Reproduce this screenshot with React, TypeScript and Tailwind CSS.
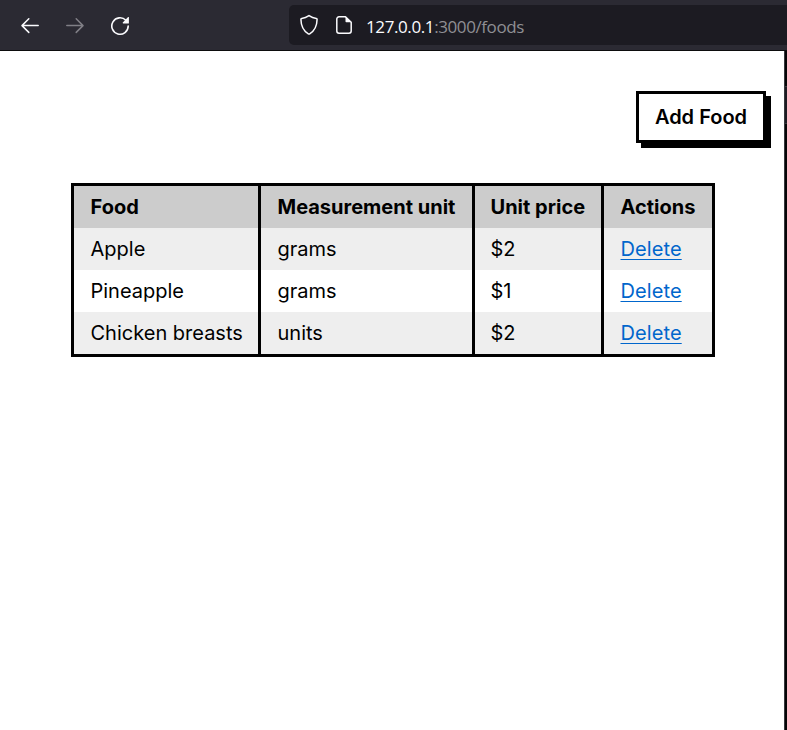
const foods = [
  { name: "Apple", unit: "grams", price: "$2" },
  { name: "Pineapple", unit: "grams", price: "$1" },
  { name: "Chicken breasts", unit: "units", price: "$2" },
];

const columns = [
  { label: "Food", width: "w-[187px]", inset: "pl-[16.5px]" },
  { label: "Measurement unit", width: "w-[214px]", inset: "pl-[16.5px]" },
  { label: "Unit price", width: "w-[129px]", inset: "pl-[15.5px]" },
  { label: "Actions", width: "w-[111px]", inset: "pl-[16.5px]" },
];

function Toolbar() {
  return (
    <header className="flex h-[51px] items-start border-b border-[#0c0c0d] bg-[#2b2a33] pt-[5px]">
      <div className="flex h-10 w-[289px] shrink-0 items-center gap-[25px] pt-[2px] pl-5">
        <svg width="20" height="20" viewBox="0 0 20 20" fill="none" stroke="#fbfbfe" strokeWidth="1.5" strokeLinecap="round" strokeLinejoin="round">
          <path d="M18.2 9.6H2M8.8 2.800L2 9.600l6.800 6.800" />
        </svg>
        <svg width="20" height="20" viewBox="0 0 20 20" fill="none" stroke="#807f86" strokeWidth="1.5" strokeLinecap="round" strokeLinejoin="round">
          <path d="M1.800 9.600H18M11.200 2.800L18 9.600l-6.800 6.800" />
        </svg>
        <svg width="20" height="20" viewBox="0 0 20 20" fill="none">
          <path d="M15.900 4.300A8.200 8.200 0 1 0 18.200 10" stroke="#fbfbfe" strokeWidth="1.600" strokeLinecap="round" />
          <path d="M18.900 1.400v5.500a.5.500 0 0 1-.5.500h-5.200c-.5 0-.7-.5-.4-.8l5.300-5.500c.3-.3.800-.1.800.3z" fill="#fbfbfe" />
        </svg>
      </div>
      <div className="flex h-10 flex-1 items-center rounded-l-[5px] bg-[#1c1b22] pl-[10px]">
        <svg width="20" height="22" viewBox="0 0 20 22" fill="none" stroke="#fbfbfe" strokeWidth="1.5" strokeLinejoin="round">
          <path d="M10 1.600c2.200 1.500 4.600 2.500 7.300 2.800.5.100.8.400.8.900-.1 5.400-1.500 11-7.400 14.600-.5.300-.9.300-1.400 0C3.400 16.300 2 10.700 1.900 5.300c0-.5.300-.8.800-.9C5.400 4.100 7.800 3.100 10 1.600z" />
        </svg>
        <svg className="ml-4" width="18" height="20" viewBox="0 0 18 20" fill="none">
          <path d="M10.500 1.800H4A2.200 2.200 0 0 0 1.800 4v12A2.200 2.200 0 0 0 4 18.200h10a2.200 2.200 0 0 0 2.200-2.200V7.200z" stroke="#fbfbfe" strokeWidth="1.500" strokeLinejoin="round" />
          <path d="M10.500 1.500v5a.7.700 0 0 0 .7.700h5z" fill="#fbfbfe" />
        </svg>
        <div className="mt-[3px] ml-[13px] font-['Open_Sans','Noto_Sans',sans-serif] text-[17px] leading-6 tracking-[-0.4px] text-[#8f8f94]">
          <span className="text-[#fbfbfe]">127.0.0.1</span>:3000/foods
        </div>
      </div>
    </header>
  );
}

export default function App() {
  return (
    <div className="flex h-[730px] w-[787px] flex-col overflow-hidden bg-white font-['Inter',sans-serif] text-[20px] text-black">
      <Toolbar />
      <div className="flex flex-1">
        <main className="w-[784px] pt-10">
          <div className="flex justify-end pr-[18px]">
            <button className="h-[52px] w-[130px] border-[3px] border-black bg-white font-semibold whitespace-nowrap shadow-[5px_5px_0_#000]">
              Add Food
            </button>
          </div>
          <table className="mt-10 ml-[71px] w-[644px] table-fixed border-separate border-spacing-0 border-[3px] border-r-0 border-black text-left leading-[30px]">
            <thead>
              <tr className="h-[42px] bg-[#cccccc]">
                {columns.map((column) => (
                  <th key={column.label} className={`${column.width} ${column.inset} border-r-[3px] border-black py-0 font-bold whitespace-nowrap`}>
                    {column.label}
                  </th>
                ))}
              </tr>
            </thead>
            <tbody>
              {foods.map((food) => (
                <tr key={food.name} className="h-[42px] odd:bg-[#eeeeee]">
                  <td className="border-r-[3px] border-black pl-[16.5px] whitespace-nowrap">{food.name}</td>
                  <td className="border-r-[3px] border-black pl-[16.5px]">{food.unit}</td>
                  <td className="border-r-[3px] border-black pl-[15.5px]">{food.price}</td>
                  <td className="border-r-[3px] border-black pl-[16.5px]">
                    <a href="#" className="tracking-[0.1px] text-[#0066cc] underline decoration-1 underline-offset-[3px]">Delete</a>
                  </td>
                </tr>
              ))}
            </tbody>
          </table>
        </main>
        <aside className="w-[3px] border-l border-[#38383d] bg-[#050506] pt-[35px]">
          <div className="h-[38px] border-y border-[#38383d] bg-[#1c1b22]" />
        </aside>
      </div>
    </div>
  );
}
